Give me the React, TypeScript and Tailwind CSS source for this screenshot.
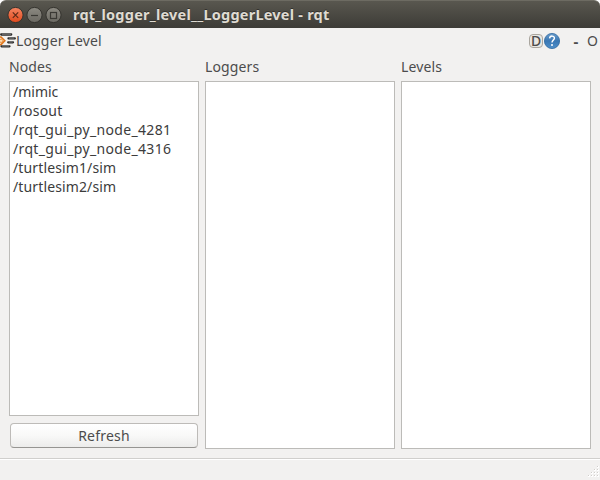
import type { ReactNode } from "react";

const nodes = [
  { name: "/mimic", tracking: "tracking-[0px]" },
  { name: "/rosout", tracking: "tracking-[0.2px]" },
  { name: "/rqt_gui_py_node_4281", tracking: "tracking-[0.34px]" },
  { name: "/rqt_gui_py_node_4316", tracking: "tracking-[0.34px]" },
  { name: "/turtlesim1/sim", tracking: "tracking-[0.13px]" },
  { name: "/turtlesim2/sim", tracking: "tracking-[0.13px]" },
];

function WindowButton({ kind }: { kind: "close" | "min" | "max" }) {
  const close = kind === "close";
  return (
    <svg width="17" height="18" viewBox="0 0 17 18" className="shrink-0">
      <defs>
        <linearGradient id={kind} x1="0" y1="0" x2="0" y2="1">
          <stop offset="0" stopColor={close ? "#f58562" : "#8c8a82"} />
          <stop offset="1" stopColor={close ? "#e0491c" : "#6b6962"} />
        </linearGradient>
      </defs>
      <circle cx="8.5" cy="9" r="7.6" fill={`url(#${kind})`} stroke="#34332e" strokeWidth="1" />
      {close && <path d="M5.8 6.4l5.4 5.4M11.2 6.4l-5.4 5.4" stroke="#5c2a18" strokeWidth="1.2" />}
      {kind === "min" && <path d="M5 9.5h7" stroke="#3a3934" strokeWidth="1.2" />}
      {kind === "max" && <rect x="5.5" y="6.5" width="6" height="6" fill="none" stroke="#3a3934" strokeWidth="1.2" />}
    </svg>
  );
}

function Column({ title, children, footer }: { title: string; children?: ReactNode; footer?: ReactNode }) {
  return (
    <section className="flex w-[190px] flex-col">
      <h2 className="h-[27px] pt-[3px] leading-5 tracking-[0.12px]">{title}</h2>
      <div className="flex-1 border border-[#bcbbb8] bg-white pl-[3px] text-[#3c3c3c]">{children}</div>
      {footer}
    </section>
  );
}

export default function App() {
  return (
    <div className="flex h-[480px] w-[600px] flex-col overflow-hidden bg-[#f2f1f0] font-['Noto_Sans','Open_Sans',sans-serif] text-[14px] text-[#4c4c4c]">
      <div className="h-7 shrink-0 bg-white">
        <header className="flex h-7 items-center gap-[2px] rounded-t-[6px] border-t border-[#6d6b62] bg-gradient-to-b from-[#59574f] to-[#3d3c37] pl-[7px]">
          <WindowButton kind="close" />
          <WindowButton kind="min" />
          <WindowButton kind="max" />
          <h1 className="mb-[2px] ml-[9px] text-[14.5px] leading-5 font-bold tracking-[0.23px] whitespace-nowrap text-[#dfdbd2] [text-shadow:0_-1px_0_#33322e]">
            rqt_logger_level__LoggerLevel - rqt
          </h1>
        </header>
      </div>

      <div className="flex h-[26px] shrink-0 items-center pr-[2px]">
        <svg width="16" height="16" viewBox="0 0 16 16" className="shrink-0">
          <path d="M0 4L1 4L4.8 7.8L1 11.6L0 11.6" fill="none" stroke="#e0761a" strokeWidth="1.6" />
          <path d="M0 6.7L1.2 5.8L3 7.8L1.2 9.8L0 8.9" fill="#fbd9b0" stroke="#ec8427" strokeWidth=".9" />
          <g stroke="#2b2b2b" strokeWidth="2.3" strokeLinecap="round">
            <path d="M1.2 1.5h10M8.5 5.4h6.3M8.2 9.3h4.8M1.5 13.3h8" />
          </g>
          <path d="M2 1.2h9M9 5.1h5.3M8.7 9h4M2 13h7" stroke="#858585" strokeWidth=".9" />
        </svg>
        <span className="leading-5 tracking-[0.15px]">Logger Level</span>
        <div className="ml-auto flex items-center">
          <button className="flex h-[14px] w-[14px] items-center justify-center rounded-[4px] border border-[#aaa69f] bg-[#e9e7e3] text-[14px] leading-none font-medium">
            D
          </button>
          <svg width="17" height="18" viewBox="0 0 17 18" className="ml-[1px]">
            <defs>
              <linearGradient id="help" x1="0" y1="0" x2="0" y2="1">
                <stop offset="0" stopColor="#6a9ccb" />
                <stop offset=".5" stopColor="#3977b4" />
                <stop offset="1" stopColor="#4e8fca" />
              </linearGradient>
            </defs>
            <circle cx="8" cy="9" r="7.6" fill="url(#help)" stroke="#2f689f" strokeWidth=".8" />
            <path d="M5.6 6.4c.2-3.2 5.1-3 4.8 0-.2 1.7-2.4 1.9-2.4 4" fill="none" stroke="#fff" strokeWidth="1.4" />
            <circle cx="8" cy="12.9" r="1" fill="#fff" />
          </svg>
          <button className="ml-[12px] w-[6px] text-center text-[15px] leading-5 font-bold">-</button>
          <button className="ml-[8px] w-[11px] text-center leading-5">O</button>
        </div>
      </div>

      <main className="flex h-[395px] shrink-0 gap-[6px] px-[9px]">
        <Column
          title="Nodes"
          footer={
            <button className="mx-[1px] mt-[7px] mb-[1px] h-[25px] rounded-[4px] border border-[#bdbbb8] border-b-[#969592] bg-gradient-to-b from-white via-[#f9f9f8] to-[#ececeb] leading-5 tracking-[0.2px]">
              Refresh
            </button>
          }
        >
          <ul>
            {nodes.map((node) => (
              <li key={node.name} className={`h-[19px] leading-[19px] whitespace-nowrap ${node.tracking}`}>
                {node.name}
              </li>
            ))}
          </ul>
        </Column>
        <Column title="Loggers" />
        <Column title="Levels" />
      </main>

      <footer className="mt-[9px] flex flex-1 items-end justify-end border-t border-[#d0cfcd] pr-[1px] pb-[2px] shadow-[inset_0_1px_0_#ffffff]">
        <svg width="11" height="12" viewBox="0 0 11 12" shapeRendering="crispEdges">
          {[[9, 0], [6, 3], [9, 3], [3, 6], [6, 6], [9, 6], [0, 9], [3, 9], [6, 9], [9, 9]].map(([x, y]) => (
            <g key={`${x}-${y}`}>
              <rect x={x} y={y} width="2" height="2" fill="#fff" />
              <rect x={x} y={y} width="1" height="1" fill="#d0cecb" />
            </g>
          ))}
        </svg>
      </footer>
    </div>
  );
}
